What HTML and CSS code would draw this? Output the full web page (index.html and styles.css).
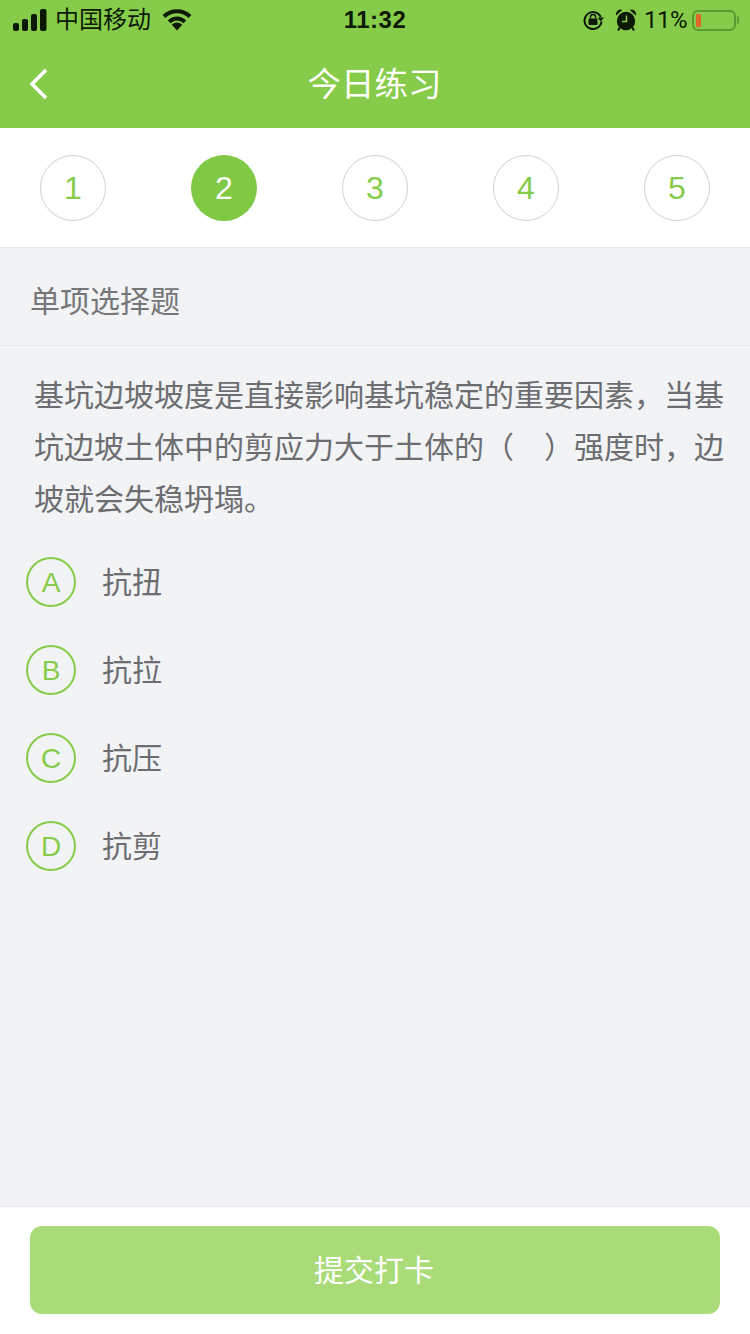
FILE: index.html
```
<!DOCTYPE html>
<html lang="zh">
<head>
<meta charset="utf-8">
<title>今日练习</title>
<link rel="stylesheet" href="styles.css">
</head>
<body>
<div class="page">
  <header class="top">
    <div class="status">
      <div class="status-left">
        <svg class="signal" width="34" height="22" viewBox="0 0 34 22"><rect x="0" y="14" width="6" height="8" rx="2"/><rect x="9" y="10" width="6" height="12" rx="2"/><rect x="18" y="5" width="6" height="17" rx="2"/><rect x="27" y="0" width="6.500" height="22" rx="2"/></svg>
        <span class="carrier">中国移动</span>
        <svg class="wifi" width="30" height="22" viewBox="0 0 30 22"><path class="arc" d="M2 7.500a18.500 18.500 0 0 1 26 0"/><path class="arc" d="M7.200 12.800a11 11 0 0 1 15.600 0"/><path d="M15 21.500l-5.200-5.800a7.500 7.500 0 0 1 10.400 0z"/></svg>
      </div>
      <div class="clock">11:32</div>
      <div class="status-right">
        <svg class="lock" width="21" height="20" viewBox="0 0 21 20"><path class="ring" d="M17.800 7A8.500 8.500 0 1 0 18.500 11.500"/><path d="M14.500 7.500h6.500l-3.300 4z"/><rect x="5.500" y="8.500" width="9" height="6.500" rx="1"/><path class="shackle" d="M7.500 8.500V7a2.500 2.500 0 0 1 5 0v1.500"/></svg>
        <svg class="alarm" width="20" height="22" viewBox="0 0 20 22"><circle cx="10" cy="12" r="9.200"/><path d="M.2 6.500a4.500 4.500 0 0 1 6-5.500zM19.800 6.500a4.500 4.500 0 0 0-6-5.500z"/><path class="hands" d="M10.500 6.500v6H6"/><path class="feet" d="M4 18l-2 3.500M16 18l2 3.500"/></svg>
        <span class="percent">11%</span>
        <div class="battery"><div class="battery-level"></div></div>
        <div class="battery-cap"></div>
      </div>
    </div>
    <div class="nav">
      <svg class="back" width="22" height="34" viewBox="0 0 22 34"><path d="M18 3L4 17l14 14" fill="none" stroke="#fff" stroke-width="3.500"/></svg>
      <h1 class="title">今日练习</h1>
    </div>
  </header>

  <div class="steps">
    <div class="step">1</div>
    <div class="step step-active">2</div>
    <div class="step">3</div>
    <div class="step">4</div>
    <div class="step">5</div>
  </div>

  <main class="main">
    <div class="kind">单项选择题</div>
    <p class="question">基坑边坡坡度是直接影响基坑稳定的重要因素，当基坑边坡土体中的剪应力大于土体的（　）强度时，边坡就会失稳坍塌。</p>
    <ul class="options">
      <li class="option"><span class="letter">A</span><span class="option-text">抗扭</span></li>
      <li class="option"><span class="letter">B</span><span class="option-text">抗拉</span></li>
      <li class="option"><span class="letter">C</span><span class="option-text">抗压</span></li>
      <li class="option"><span class="letter">D</span><span class="option-text">抗剪</span></li>
    </ul>
  </main>

  <footer class="footer">
    <button class="submit" type="button">提交打卡</button>
  </footer>
</div>
</body>
</html>
```
FILE: styles.css
```
* { box-sizing: border-box; }
html, body { margin: 0; padding: 0; }
body { font-family: "Liberation Sans", "Noto Sans CJK SC", sans-serif; }
.page { width: 750px; height: 1334px; display: flex; flex-direction: column; background: #f2f3f5; overflow: hidden; }

.top { height: 128px; background: #86cc4a; flex: none; }
.status { height: 40px; padding: 0 11px 0 13px; display: flex; align-items: center; justify-content: space-between; color: #0c1a05; position: relative; }
.status svg { fill: #0c1a05; display: block; }
.status-left { display: flex; align-items: center; width: 200px; }
.carrier { font-size: 24px; margin-left: 8px; line-height: 40px; }
.wifi { margin-left: 11px; }
.wifi .arc { fill: none; stroke: #0c1a05; stroke-width: 4; }
.clock { font-size: 24px; font-weight: 700; letter-spacing: 0.5px; position: absolute; left: 0; right: 0; text-align: center; }
.status-right { display: flex; align-items: center; }
.lock .ring { fill: none; stroke: #0c1a05; stroke-width: 2; }
.lock .shackle { fill: none; stroke: #0c1a05; stroke-width: 1.5; }
.alarm { margin-left: 12px; }
.alarm .hands { fill: none; stroke: #86cc4a; stroke-width: 1.5; }
.alarm .feet { fill: none; stroke: #0c1a05; stroke-width: 2; }
.percent { font-family: Roboto, sans-serif; font-size: 24px; width: 42px; margin-left: 8px; letter-spacing: -0.5px; white-space: nowrap; }
.battery { width: 44px; height: 21px; margin-left: 6px; border: 2px solid #5a9a2e; border-radius: 6px; padding: 2px; }
.battery-level { width: 5px; height: 100%; background: #e2662c; border-radius: 1px; }
.battery-cap { width: 2px; height: 8px; margin-left: 1px; background: #5a9a2e; border-radius: 0 2px 2px 0; }

.nav { height: 88px; display: flex; align-items: center; justify-content: center; position: relative; }
.back { position: absolute; left: 28px; top: 27px; }
.title { margin: 2px 1px 0 0; font-size: 33.5px; font-weight: 400; color: #fff; line-height: 84px; }

.steps { height: 120px; flex: none; background: #fff; border-bottom: 1px solid #e6e7ea; padding: 27px 40px 0; display: flex; justify-content: space-between; align-items: flex-start; }
.step { width: 66px; height: 66px; border-radius: 50%; border: 1px solid #cfd0d2; color: #86cc4a; font-size: 32px; display: flex; align-items: center; justify-content: center; }
.step-active { background: #7fc944; border: none; color: #fff; }

.main { flex: 1; }
.kind { height: 98px; padding-left: 30px; border-bottom: 1px solid #e6e7ea; font-size: 30px; color: #747678; line-height: 108px; }
.question { margin: 0; padding: 24px 20px 0 34px; font-size: 30px; line-height: 52px; color: #6b6d70; }
.options { list-style: none; margin: 0; padding: 31px 0 0 26px; display: flex; flex-direction: column; gap: 38px; }
.option { height: 50px; display: flex; align-items: center; }
.letter { width: 50px; height: 50px; border-radius: 50%; border: 2px solid #86cc4a; color: #86cc4a; font-size: 28px; padding-top: 1px; display: flex; align-items: center; justify-content: center; }
.option-text { margin-left: 26px; font-size: 30px; line-height: 50px; height: 50px; margin-top: 2px; color: #6b6d70; }

.footer { height: 128px; flex: none; background: #fff; border-top: 1px solid #e6e7ea; padding: 19px 30px 0; }
.submit { display: block; width: 690px; height: 88px; border: none; border-radius: 12px; background: #a9dc78; color: #fff; font-family: inherit; font-size: 30px; padding: 0 2px 4px 0; }
```
